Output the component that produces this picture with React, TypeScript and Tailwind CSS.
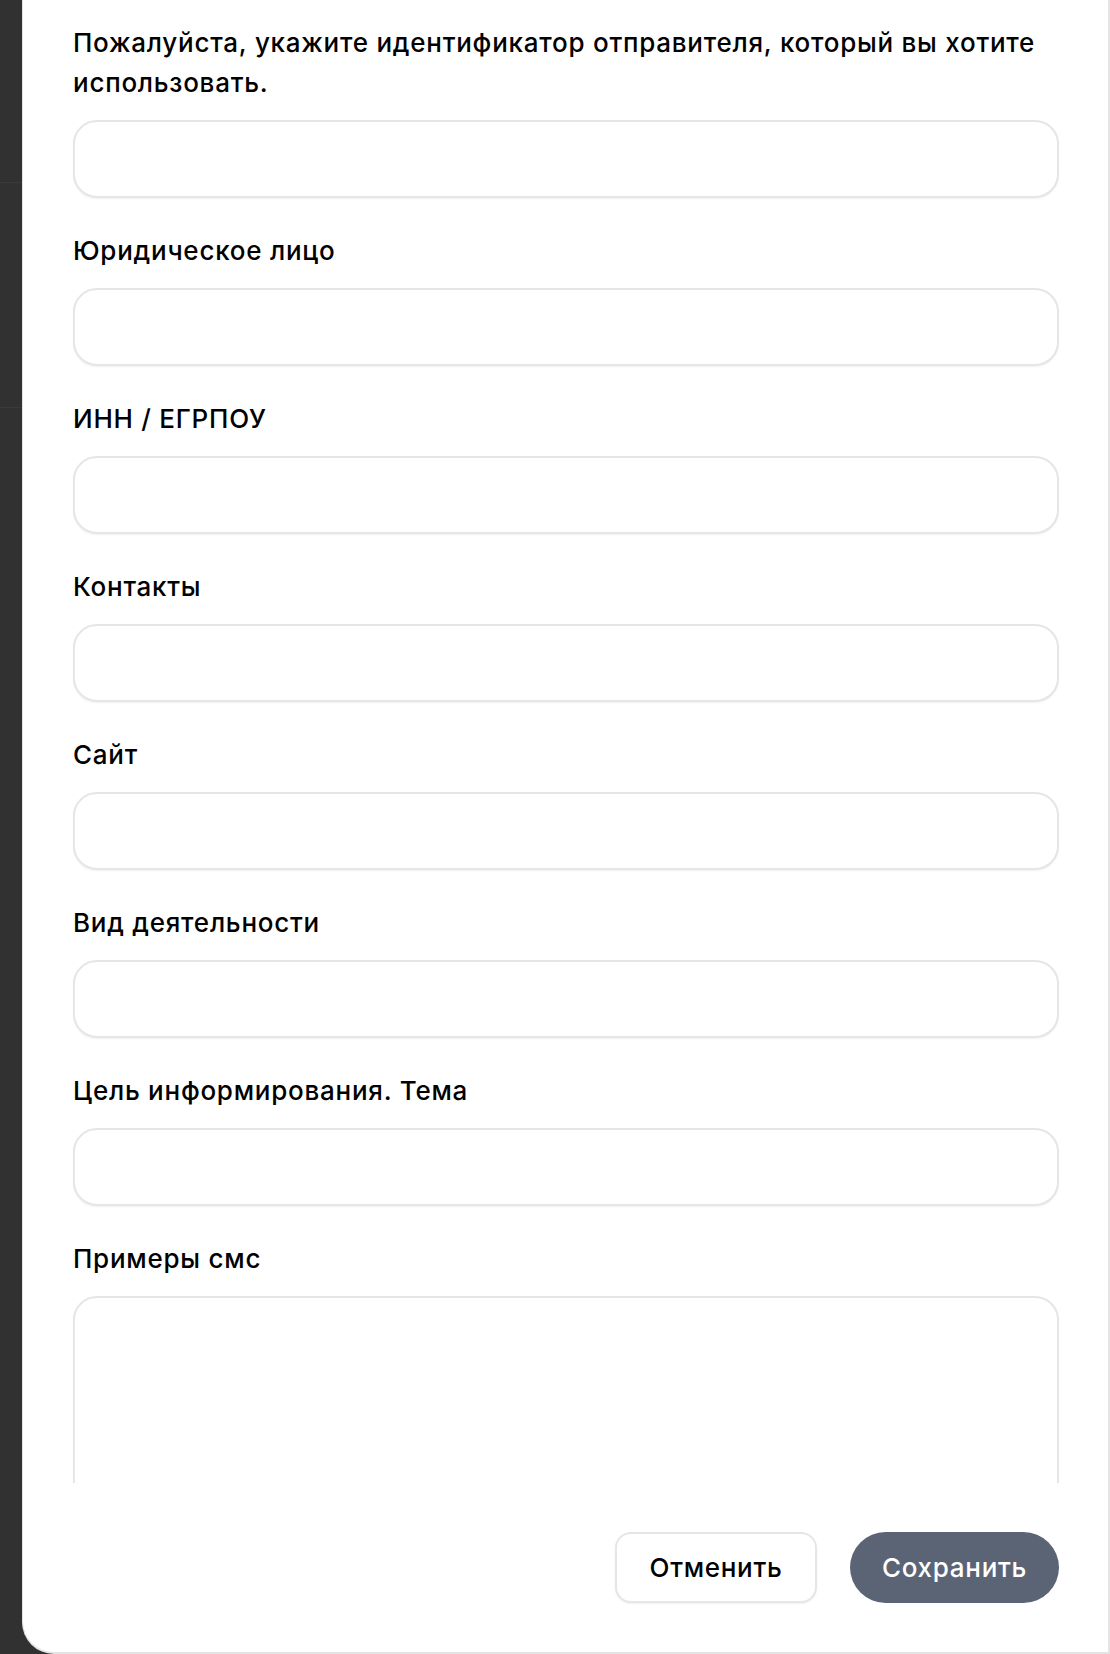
const fields = [
  "Пожалуйста, укажите идентификатор отправителя, который вы хотите использовать.",
  "Юридическое лицо",
  "ИНН / ЕГРПОУ",
  "Контакты",
  "Сайт",
  "Вид деятельности",
  "Цель информирования. Тема",
];

function Field({ label, multiline }: { label: string; multiline?: boolean }) {
  return (
    <div className="flex flex-col">
      <label className="mb-[17px] text-[26px] font-medium leading-[40px] tracking-[0.75px] text-black">
        {label}
      </label>
      {multiline ? (
        <textarea className="h-[220px] w-full resize-none rounded-[24px] border-2 border-[#e6e6e6] bg-white shadow-[0_1px_2px_rgba(0,0,0,0.06)] outline-none" />
      ) : (
        <input
          type="text"
          className="h-[78px] w-full rounded-[24px] border-2 border-[#e6e6e6] bg-white shadow-[0_1px_2px_rgba(0,0,0,0.06)] outline-none"
        />
      )}
    </div>
  );
}

export default function App() {
  return (
    <div className="flex h-[1654px] w-[1110px] overflow-hidden bg-[#313131] font-['Inter','Liberation_Sans',sans-serif]">
      {/* page behind the overlay */}
      <div className="flex w-[22px] shrink-0 flex-col">
        <div className="h-[183px] border-b border-[#3a3a3a]" />
        <div className="h-[225px] border-b border-[#3a3a3a]" />
      </div>

      <div className="flex flex-1 flex-col rounded-bl-[32px] border-b-2 border-l border-r-2 border-[#e4e4e4] bg-white">
        <div className="h-[1483px] overflow-hidden pl-[50px] pr-[49px] pt-[23px]">
          <div className="flex flex-col gap-[33px]">
            {fields.map((f) => (
              <Field key={f} label={f} />
            ))}
            <Field label="Примеры смс" multiline />
          </div>
        </div>

        <div className="flex flex-1 items-start justify-end gap-[33px] pl-[50px] pr-[49px] pt-[49px]">
          <button className="h-[71px] w-[202px] rounded-[16px] border-2 border-[#e6e6e6] bg-white text-[26px] font-medium tracking-[0.7px] text-black shadow-[0_1px_2px_rgba(0,0,0,0.06)]">
            Отменить
          </button>
          <button className="h-[71px] w-[209px] rounded-full bg-[#5b6475] text-[26px] font-medium tracking-[0.7px] text-white">
            Сохранить
          </button>
        </div>
      </div>
    </div>
  );
}
